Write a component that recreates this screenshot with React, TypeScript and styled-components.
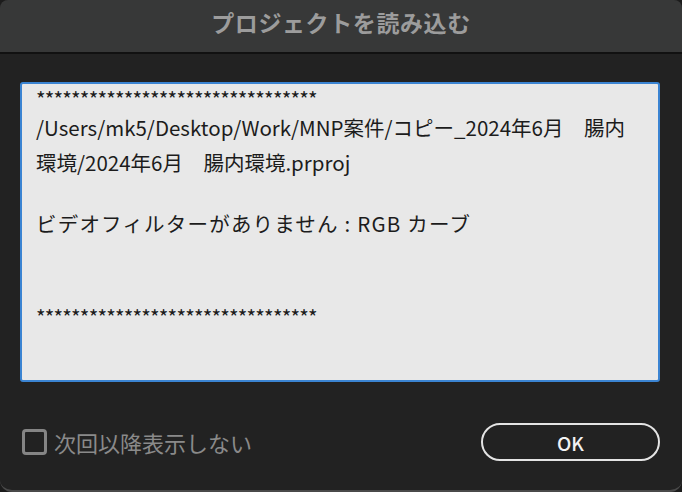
import styled, { createGlobalStyle } from "styled-components"

const GlobalStyle = createGlobalStyle`
  html, body {
    margin: 0;
    padding: 0;
    background: #1c1c1c;
  }
  body {
    font-family: "Noto Sans CJK JP", "Noto Sans", sans-serif;
  }
`

const STARS = "********************************"

export default function App() {
  return <>
    <GlobalStyle />
    <Dialog>
      <TitleBar>
        <h1>プロジェクトを読み込む</h1>
      </TitleBar>
      <Body>
        <MessageBox>
          <Text $lh={24} $ls={-0.8}>{STARS}</Text>
          <Text $lh={35}>
            /Users/mk5/Desktop/Work/MNP案件/コピー_2024年6月　腸内<br />
            環境/2024年6月　腸内環境.prproj
          </Text>
          <Text $lh={30} $mt={28} $ls={1.2}>ビデオフィルターがありません : RGB カーブ</Text>
          <Text $lh={30} $mt={63} $ls={-0.8}>{STARS}</Text>
        </MessageBox>
        <Footer>
          <CheckLabel>
            <CheckBox />
            <span>次回以降表示しない</span>
          </CheckLabel>
          <OkButton>OK</OkButton>
        </Footer>
      </Body>
    </Dialog>
  </>
}

const Dialog = styled.div`
  width: 682px;
  height: 490px;
  display: flex;
  flex-direction: column;
  background: #222222;
  border-radius: 8px 8px 12px 12px;
  border-bottom: 2px solid #4a4a4a;
  overflow: hidden;
`

const TitleBar = styled.header`
  box-sizing: border-box;
  height: 54px;
  flex: 0 0 54px;
  padding-bottom: 9px;
  background: #373838;
  border-bottom: 2px solid #111111;
  display: flex;
  align-items: center;
  justify-content: center;

  h1 {
    margin: 0;
    font-size: 23px;
    font-weight: 700;
    color: #9c9c9c;
    letter-spacing: 0.6px;
  }
`

const Body = styled.main`
  flex: 1;
  padding: 28px 22px 0 20px;
  display: flex;
  flex-direction: column;
`

const MessageBox = styled.div`
  box-sizing: border-box;
  height: 300px;
  background: #e8e8e8;
  border: 2px solid #3b84d2;
  border-radius: 3px;
  padding: 2px 14px 0;
  color: #1c1c1c;
  font-size: 20.5px;
`

const Text = styled.p<{ $lh: number; $mt?: number; $ls?: number }>`
  margin: ${p => p.$mt ?? 0}px 0 0;
  line-height: ${p => p.$lh}px;
  letter-spacing: ${p => p.$ls ?? 0}px;
  white-space: nowrap;
`

const Footer = styled.div`
  margin-top: 41px;
  display: flex;
  align-items: center;
  justify-content: space-between;
`

const CheckLabel = styled.label`
  display: flex;
  align-items: center;
  gap: 7px;
  padding-left: 2px;
  color: #8a8a8a;
  font-size: 22px;
`

const CheckBox = styled.span`
  box-sizing: border-box;
  width: 25px;
  height: 26px;
  border: 3px solid #858585;
  border-radius: 4px;
`

const OkButton = styled.button`
  box-sizing: border-box;
  width: 179px;
  height: 38px;
  border: 2.5px solid #e4e4e4;
  border-radius: 19px;
  background: transparent;
  color: #f2f2f2;
  font-family: "Noto Sans CJK JP", "Noto Sans", sans-serif;
  font-size: 19px;
  font-weight: 500;
`
